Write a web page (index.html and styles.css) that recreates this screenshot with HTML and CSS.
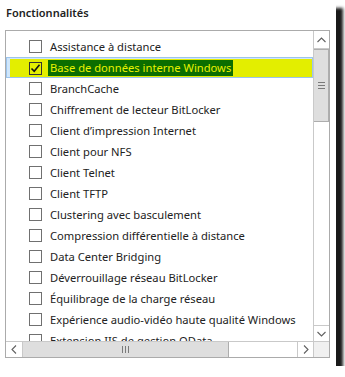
FILE: index.html
```html
<!DOCTYPE html>
<html lang="fr">
<head>
<meta charset="utf-8">
<link rel="stylesheet" href="styles.css">
</head>
<body>
<div class="frame">
  <div class="title">Fonctionnalités</div>
  <div class="listbox">
    <div class="content">
      <div class="row"><span class="cb"></span><span class="label">Assistance à distance</span></div>
      <div class="row sel"><div class="hl"><span class="cb on"><svg width="11" height="11" viewBox="0 0 11 11"><polyline points="1.5,5.5 4.2,8.2 9.5,1.8" fill="none" stroke="#111" stroke-width="1.6"/></svg></span><span class="label">Base de données interne Windows</span></div></div>
      <div class="row"><span class="cb"></span><span class="label">BranchCache</span></div>
      <div class="row"><span class="cb"></span><span class="label">Chiffrement de lecteur BitLocker</span></div>
      <div class="row"><span class="cb"></span><span class="label">Client d’impression Internet</span></div>
      <div class="row"><span class="cb"></span><span class="label">Client pour NFS</span></div>
      <div class="row"><span class="cb"></span><span class="label">Client Telnet</span></div>
      <div class="row"><span class="cb"></span><span class="label">Client TFTP</span></div>
      <div class="row"><span class="cb"></span><span class="label">Clustering avec basculement</span></div>
      <div class="row"><span class="cb"></span><span class="label">Compression différentielle à distance</span></div>
      <div class="row"><span class="cb"></span><span class="label">Data Center Bridging</span></div>
      <div class="row"><span class="cb"></span><span class="label">Déverrouillage réseau BitLocker</span></div>
      <div class="row"><span class="cb"></span><span class="label">Équilibrage de la charge réseau</span></div>
      <div class="row"><span class="cb"></span><span class="label">Expérience audio-vidéo haute qualité Windows</span></div>
      <div class="row"><span class="cb"></span><span class="label">Extension IIS de gestion OData</span></div>
    </div>
    <div class="vscroll">
      <div class="vbtn up"><svg width="9" height="6" viewBox="0 0 9 6"><polyline points="0.5,5 4.5,1 8.5,5" fill="none" stroke="#606060" stroke-width="1.1"/></svg></div>
      <div class="vthumb"><span class="grip-h"></span></div>
      <div class="vtrack"></div>
      <div class="vbtn down"><svg width="9" height="6" viewBox="0 0 9 6"><polyline points="0.5,1 4.5,5 8.5,1" fill="none" stroke="#606060" stroke-width="1.1"/></svg></div>
    </div>
    <div class="hscroll">
      <div class="hbtn left"><svg width="6" height="9" viewBox="0 0 6 9"><polyline points="5,0.5 1,4.5 5,8.5" fill="none" stroke="#606060" stroke-width="1.1"/></svg></div>
      <div class="hthumb"><span class="grip-v"></span></div>
      <div class="htrack"></div>
      <div class="hbtn right"><svg width="6" height="9" viewBox="0 0 6 9"><polyline points="1,0.5 5,4.5 1,8.5" fill="none" stroke="#606060" stroke-width="1.1"/></svg></div>
    </div>
    <div class="corner"></div>
  </div>
</div>
</body>
</html>
```
FILE: styles.css
```css
html, body {
  margin: 0;
  padding: 0;
  background: #ffffff;
}
body {
  font-family: "Noto Sans", "Open Sans", sans-serif;
  color: #222222;
}
.frame {
  width: 336px;
  height: 366px;
  background: #ffffff;
  box-shadow: 7px 8px 3px rgba(0, 0, 0, 0.9);
  box-sizing: border-box;
  padding-top: 4px;
}
.title {
  font-size: 11px;
  font-weight: 600;
  line-height: 17px;
  padding-left: 6px;
  height: 26px;
}
.listbox {
  margin-left: 5px;
  width: 325px;
  height: 328px;
  box-sizing: border-box;
  border: 1px solid #ababab;
  display: grid;
  grid-template-columns: 307px 16px;
  grid-template-rows: 310px 16px;
}
.content {
  overflow: hidden;
  padding-top: 5px;
}
.row {
  height: 21px;
  display: flex;
  align-items: center;
  padding-left: 23px;
  box-sizing: border-box;
  font-size: 11.2px;
  white-space: nowrap;
}
.cb {
  width: 13px;
  height: 13px;
  box-sizing: border-box;
  border: 1px solid #707070;
  background: #ffffff;
  flex: none;
  display: flex;
  align-items: center;
  justify-content: center;
}
.label {
  margin-left: 8px;
  line-height: 16px;
}
.row.sel {
  padding: 1px 0 0 3px;
  border: 1px solid #9cc4ec;
  background: #cfe6fb;
  align-items: flex-start;
}
.hl {
  flex: 1;
  height: 18px;
  background: #e3ee00;
  display: flex;
  align-items: center;
  padding-left: 19px;
}
.cb.on {
  background: #e3ee00;
  border-color: #333;
}
.hl .label {
  margin-left: 6px;
  padding: 0 2px;
  background: #0b6e00;
  color: #e8f200;
}
.vscroll {
  border-left: 1px solid #c9c9c9;
  display: flex;
  flex-direction: column;
}
.vbtn {
  flex: none;
  display: flex;
  align-items: center;
  justify-content: center;
}
.vbtn.up {
  height: 17px;
  border-bottom: 1px solid #c9c9c9;
}
.vbtn.down {
  height: 16px;
  border-top: 1px solid #c9c9c9;
  box-sizing: border-box;
}
.vthumb {
  height: 73px;
  box-sizing: border-box;
  border: 1px solid #adadad;
  border-left: none;
  background: #dedede;
  display: flex;
  align-items: center;
  justify-content: center;
}
.vtrack {
  flex: 1;
}
.grip-h {
  width: 7px;
  height: 7px;
  background: repeating-linear-gradient(to bottom, #7a7a7a 0 1px, transparent 1px 3px);
}
.hscroll {
  border-top: 1px solid #c9c9c9;
  display: flex;
}
.hbtn {
  flex: none;
  display: flex;
  align-items: center;
  justify-content: center;
}
.hbtn.left {
  width: 16px;
  border-right: 1px solid #c9c9c9;
}
.hbtn.right {
  width: 15px;
  border-left: 1px solid #c9c9c9;
}
.hthumb {
  width: 206px;
  box-sizing: border-box;
  border-right: 1px solid #adadad;
  background: #dedede;
  display: flex;
  align-items: center;
  justify-content: center;
}
.htrack {
  flex: 1;
}
.grip-v {
  width: 7px;
  height: 7px;
  background: repeating-linear-gradient(to right, #7a7a7a 0 1px, transparent 1px 3px);
}
.corner {
  border-top: 1px solid #c9c9c9;
  border-left: 1px solid #c9c9c9;
  background: #f0f0f0;
}
```
